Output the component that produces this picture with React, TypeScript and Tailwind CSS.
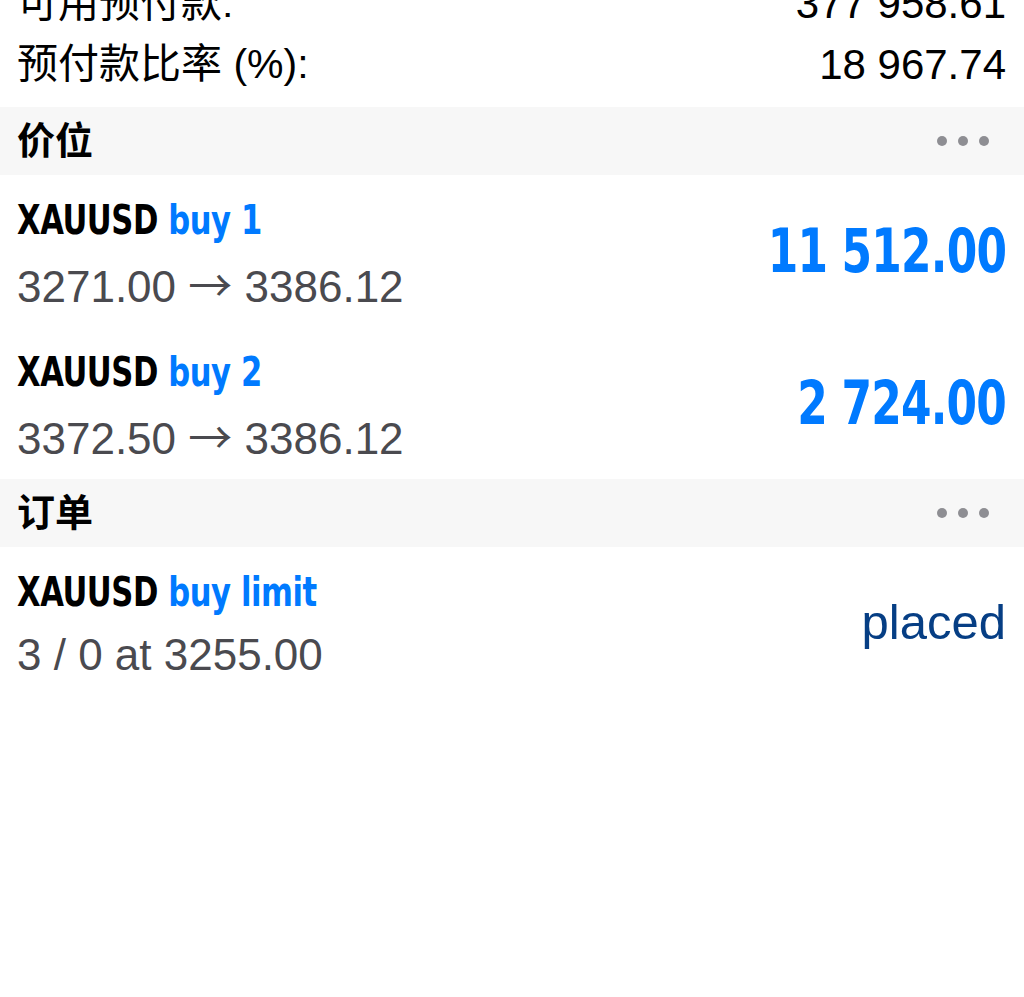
import React from "react";

const SANS = "'Liberation Sans', 'Noto Sans CJK SC', Arial, sans-serif";
const COND = "'DejaVu Sans Condensed', 'DejaVu Sans', sans-serif";

function InfoRow({ label, value }: { label: string; value: string }) {
  return (
    <div className="flex h-[61px] items-center justify-between pl-[17px] pr-[18px] text-[41px] text-black">
      <span>{label}</span>
      <span className="text-[42px]">{value}</span>
    </div>
  );
}

function Dots() {
  return (
    <div className="flex items-center gap-[11px]">
      <span className="block h-[10px] w-[10px] rounded-full bg-[#8e8e93]" />
      <span className="block h-[10px] w-[10px] rounded-full bg-[#8e8e93]" />
      <span className="block h-[10px] w-[10px] rounded-full bg-[#8e8e93]" />
    </div>
  );
}

function SectionHeader({ title }: { title: string }) {
  return (
    <div className="flex h-[68px] items-center justify-between bg-[#f7f7f7] pl-[17px] pr-[35px]">
      <span className="text-[38px] font-bold text-black">{title}</span>
      <Dots />
    </div>
  );
}

function Detail({ from, to }: { from: string; to: string }) {
  return (
    <>
      {from}{" "}
      <span style={{ fontFamily: "'Noto Sans CJK SC', sans-serif" }}>→</span>{" "}
      {to}
    </>
  );
}

function TradeRow({
  kind,
  detail,
  right,
  placed,
}: {
  kind: string;
  detail: React.ReactNode;
  right: string;
  placed?: boolean;
}) {
  return (
    <div className="flex h-[152px] items-center justify-between pl-[17px] pr-[18px]">
      <div className="flex flex-col">
        <div
          className="h-[64px] whitespace-nowrap text-[41px] font-bold leading-[64px]"
          style={{ fontFamily: COND, fontStretch: "condensed" }}
        >
          <span className="inline-block origin-left scale-x-[0.83] tracking-[-0.5px]">
            <span className="text-black">XAUUSD</span>{" "}
            <span className="text-[#007aff]">{kind}</span>
          </span>
        </div>
        <div className="h-[62px] whitespace-nowrap text-[44px] leading-[62px] text-[#4a4a4f]">
          {detail}
        </div>
      </div>
      {placed ? (
        <span className="text-[49px] text-[#063e84]">{right}</span>
      ) : (
        <span
          className="inline-block origin-right scale-x-[0.8] text-[61px] font-bold tracking-[-1px] text-[#007aff]"
          style={{ fontFamily: COND, fontStretch: "condensed" }}
        >
          {right}
        </span>
      )}
    </div>
  );
}

export default function App() {
  return (
    <div
      className="h-[997px] w-[1024px] overflow-hidden bg-white"
      style={{ fontFamily: SANS }}
    >
      <div className="-mt-[27px] pb-[12px]">
        <InfoRow label="可用预付款:" value="377 958.61" />
        <InfoRow label="预付款比率 (%):" value="18 967.74" />
      </div>
      <SectionHeader title="价位" />
      <TradeRow
        kind="buy 1"
        detail={<Detail from="3271.00" to="3386.12" />}
        right="11 512.00"
      />
      <TradeRow
        kind="buy 2"
        detail={<Detail from="3372.50" to="3386.12" />}
        right="2 724.00"
      />
      <SectionHeader title="订单" />
      <TradeRow kind="buy limit" detail="3 / 0 at 3255.00" right="placed" placed />
    </div>
  );
}
